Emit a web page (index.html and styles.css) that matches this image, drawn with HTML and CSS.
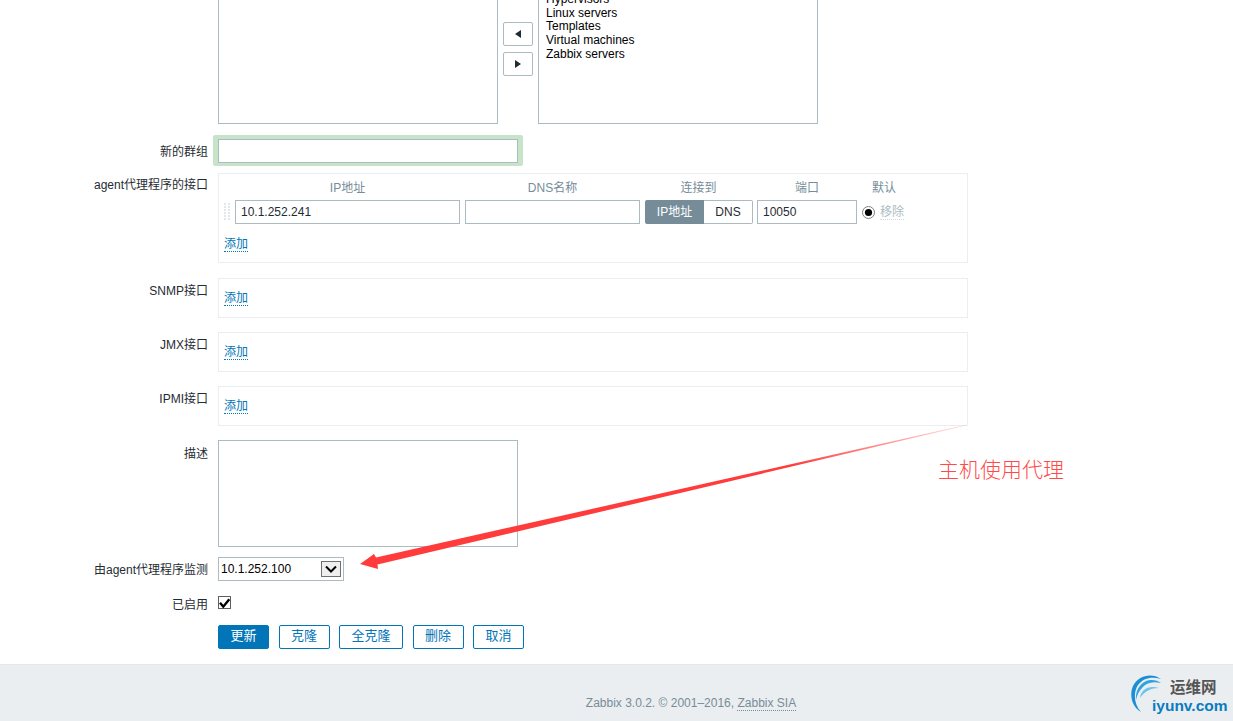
FILE: index.html
```html
<!DOCTYPE html>
<html lang="zh">
<head>
<meta charset="utf-8">
<title>Zabbix</title>
<link rel="stylesheet" href="styles.css">
</head>
<body>
<main class="form">
  <div class="row row-lists">
    <div class="label"></div>
    <div class="twin">
      <div class="listbox"></div>
      <div class="movers">
        <button class="mover"><svg width="6" height="8" viewBox="0 0 6 8"><path d="M6 0v8L0 4z"/></svg></button>
        <button class="mover"><svg width="6" height="8" viewBox="0 0 6 8"><path d="M0 0v8l6-4z"/></svg></button>
      </div>
      <div class="listbox listbox-items">
        <div>Hypervisors</div>
        <div>Linux servers</div>
        <div>Templates</div>
        <div>Virtual machines</div>
        <div>Zabbix servers</div>
      </div>
    </div>
  </div>

  <div class="row row-group">
    <div class="label">新的群组</div>
    <div class="glow"><input class="field field-300" type="text"></div>
  </div>

  <div class="row row-agent">
    <div class="label label-tight">agent代理程序的接口</div>
    <div class="ibox">
      <div class="igrid">
        <span></span>
        <div class="ihead">IP地址</div>
        <div class="ihead">DNS名称</div>
        <div class="ihead">连接到</div>
        <div class="ihead">端口</div>
        <div class="ihead">默认</div>
        <span class="drag"></span>
        <input class="field field-full" type="text" value="10.1.252.241">
        <input class="field field-full" type="text">
        <div class="seg"><span class="seg-on">IP地址</span><span class="seg-off">DNS</span></div>
        <input class="field field-full" type="text" value="10050">
        <div class="defcell">
          <svg class="radio" width="13" height="13" viewBox="0 0 13 13"><circle cx="6.5" cy="6.5" r="6" fill="#fff" stroke="#7f7f7f"/><circle cx="6.5" cy="6.5" r="3.6" fill="#000"/></svg>
          <span class="remove">移除</span>
        </div>
      </div>
      <a class="add add-first">添加</a>
    </div>
  </div>

  <div class="row row-15">
    <div class="label">SNMP接口</div>
    <div class="ibox"><a class="add">添加</a></div>
  </div>
  <div class="row row-14">
    <div class="label">JMX接口</div>
    <div class="ibox"><a class="add">添加</a></div>
  </div>
  <div class="row row-14">
    <div class="label">IPMI接口</div>
    <div class="ibox"><a class="add">添加</a></div>
  </div>
  <div class="row row-14">
    <div class="label label-low">描述</div>
    <textarea class="area"></textarea>
  </div>
  <div class="row row-10">
    <div class="label">由agent代理程序监测</div>
    <div class="select"><span>10.1.252.100</span>
      <span class="select-btn"><svg width="12" height="8" viewBox="0 0 12 8"><path d="M1 1.5l5 5 5-5" fill="none" stroke="#000" stroke-width="2"/></svg></span>
    </div>
  </div>
  <div class="row row-15">
    <div class="label label-check">已启用</div>
    <span class="check"><svg width="13" height="13" viewBox="0 0 13 13"><path d="M2 6.7l3.3 4 6-7.4" fill="none" stroke="#000" stroke-width="2.4"/></svg></span>
  </div>
  <div class="row row-actions">
    <div class="label"></div>
    <div class="actions">
      <button class="btn btn-main">更新</button>
      <button class="btn">克隆</button>
      <button class="btn">全克隆</button>
      <button class="btn">删除</button>
      <button class="btn">取消</button>
    </div>
  </div>
</main>

<footer class="footer">Zabbix 3.0.2. © 2001–2016, <a class="sia">Zabbix SIA</a></footer>

<svg class="arrow" width="1233" height="721" viewBox="0 0 1233 721">
  <defs>
    <linearGradient id="fade" gradientUnits="userSpaceOnUse" x1="968" y1="425" x2="790" y2="466">
      <stop offset="0" stop-color="#ff3b3b" stop-opacity=".15"/>
      <stop offset="1" stop-color="#ff3b3b"/>
    </linearGradient>
  </defs>
  <path d="M966 424.8L376 557.5 374 554 360 564 378 569 377.5 564.5 966 425.4z" fill="url(#fade)"/>
</svg>
<div class="note">主机使用代理</div>

<div class="logo">
  <svg class="logo-mark" width="38" height="40" viewBox="0 0 38 40">
    <path d="M11 38C2 33-1 21 3 12 8 2 21-2 31 5c-9-3-18-1-23 6C3 19 4 30 11 38z" fill="#1a8fd3"/>
    <path d="M6 26C5 16 11 7 20 6c4-.4 8 .5 11 3-9-2-15 0-19 5-3 3-5 7-6 12z" fill="#2fa3e0"/>
    <path d="M10 24c1-8 8-13 19-10-8 0-14 3-19 10z" fill="#6cc4ee"/>
  </svg>
  <div class="logo-cn">运维网</div>
  <div class="logo-en">iyunv.com</div>
</div>
</body>
</html>
```

FILE: styles.css
```css
* { box-sizing: border-box; }
html, body { margin: 0; height: 721px; overflow: hidden; background: #fff; }
body { position: relative; font: 12px/14px "Liberation Sans", "Noto Sans CJK SC", sans-serif; color: #1f2c33; }

.form { margin-top: -16px; padding-bottom: 15px; }
.row { display: grid; grid-template-columns: 208px 1fr; column-gap: 10px; align-items: start; }
.row-group { margin-top: 15px; }
.row-agent { margin-top: 10px; }
.row-15 { margin-top: 15px; }
.row-14 { margin-top: 14px; }
.row-10 { margin-top: 10px; }
.row-actions { margin-top: 13px; }
.label { text-align: right; padding-top: 6px; }
.label-tight { padding-top: 5px; }
.label-low { padding-top: 7px; }
.label-check { padding-top: 2px; }

.twin { display: flex; gap: 5px; }
.listbox { width: 280px; height: 140px; border: 1px solid #acbbc2; background: #fff; }
.listbox-items { padding: 8px 7px 0; line-height: 13.67px; color: #000; }
.movers { padding-top: 38px; display: flex; flex-direction: column; gap: 6px; }
.mover { width: 30px; height: 24px; padding: 0; border: 1px solid #acbbc2; border-radius: 2px; background: #fff; display: flex; align-items: center; justify-content: center; }
.mover path { fill: #1f2c33; }

.field { height: 24px; border: 1px solid #acbbc2; background: #fff; padding: 0 5px; font: 12px "Liberation Sans", "Noto Sans CJK SC", sans-serif; color: #1f2c33; outline: 0; }
.field-300 { width: 300px; display: block; }
.field-full { width: 100%; }
.glow { width: 310px; margin: -4px 0 -3px -5px; padding: 4px 5px 3px; background: #c8e4c8; border-radius: 2px; }

.ibox { width: 750px; border: 1px solid #ebeef0; padding: 12px 5px 11px; background: #fff; }
.row-agent .ibox { padding-top: 7px; height: 90px; }
.igrid { display: grid; grid-template-columns: 6px 225px 175px 107px 100px 44px; column-gap: 5px; row-gap: 5px; align-items: center; }
.ihead { text-align: center; color: #768d99; }
.drag { width: 6px; height: 18px; background-image: repeating-linear-gradient(0deg, #fff 0 1px, transparent 1px 3px), repeating-linear-gradient(90deg, #e3e7e9 0 2px, #fff 2px 4px); }
.seg { width: 108px; height: 24px; display: flex; }
.seg-on { width: 59px; background: #768d99; color: #fff; border-radius: 2px 0 0 2px; text-align: center; line-height: 24px; }
.seg-off { width: 49px; border: 1px solid #acbbc2; border-left: 0; border-radius: 0 2px 2px 0; text-align: center; line-height: 22px; color: #1f2c33; }
.defcell { display: flex; align-items: center; gap: 5px; }
.radio { flex: none; }
.remove { color: #acbbc2; border-bottom: 1px dotted #cfd8dc; }
.add { display: inline-block; color: #0275b8; border-bottom: 1px dotted #0275b8; vertical-align: top; }
.add-first { margin-top: 13px; }

.area { display: block; width: 300px; height: 107px; border: 1px solid #acbbc2; background: #fff; resize: none; outline: 0; }
.select { width: 126px; height: 24px; border: 1px solid #acbbc2; padding-left: 2px; display: flex; align-items: center; justify-content: space-between; color: #000; }
.select-btn { width: 20px; height: 16px; margin-right: 2px; background: #efefef; border: 1px solid #707070; display: flex; align-items: center; justify-content: center; }
.check { display: block; width: 13px; height: 13px; border: 1px solid #5f5f5f; background: #fff; position: relative; }
.check svg { display: block; margin: -1px; overflow: visible; }

.actions { display: flex; gap: 9.5px; }
.btn { height: 24px; padding: 0 11.5px 2px; border: 1px solid #0275b8; border-radius: 2px; background: #fff; color: #0275b8; font: 13px/16px "Liberation Sans", "Noto Sans CJK SC", sans-serif; }
.btn-main { background: #0275b8; color: #fff; width: 51px; padding: 0 0 2px; }

.footer { height: 57px; background: #ebeef0; border-top: 1px solid #e4e8ea; padding: 31px 0 0 149px; text-align: center; color: #768d99; }
.sia { border-bottom: 1px dotted #768d99; }

.arrow { position: absolute; left: 0; top: 0; pointer-events: none; }
.note { position: absolute; left: 938px; top: 455px; font: 300 21px/26px "Noto Sans CJK SC", sans-serif; color: #ff4a4a; }

.logo { position: absolute; left: 1130px; top: 674px; width: 103px; height: 45px; }
.logo-mark { position: absolute; left: 0; top: 0; }
.logo-cn { position: absolute; left: 40px; top: 4px; font: 700 15.5px/16px "Noto Sans CJK SC", sans-serif; color: #555; }
.logo-en { position: absolute; left: 22px; top: 23.5px; font: 700 15.5px/16px "Liberation Sans", sans-serif; color: #0a7cc0; }
```
